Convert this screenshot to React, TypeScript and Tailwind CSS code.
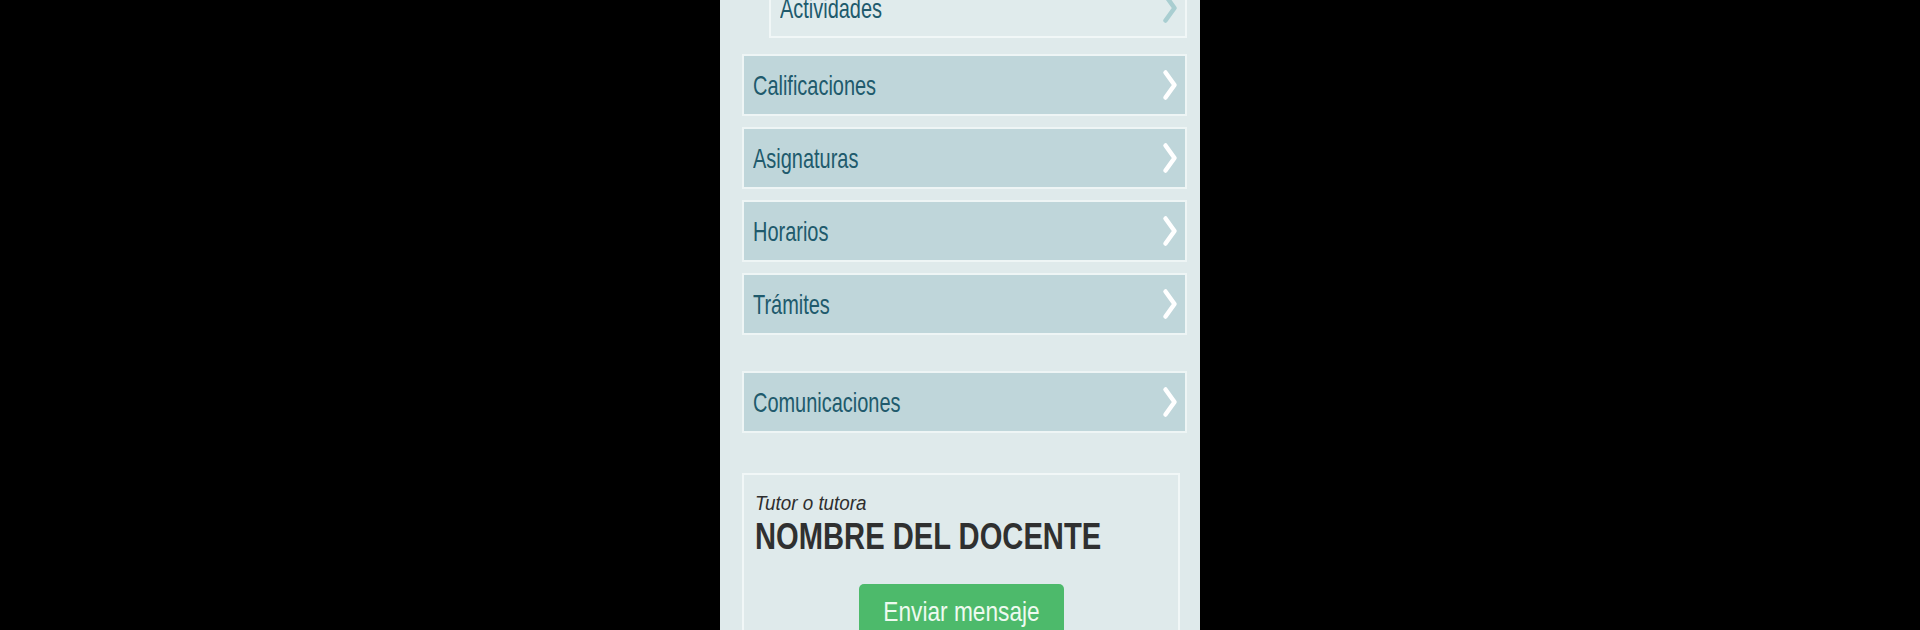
import * as React from 'react';

function Chevron({ faded = false }: { faded?: boolean }) {
  return (
    <svg width="16" height="32" viewBox="0 0 16 32" className="shrink-0">
      <path
        d="M3.5 3.5 L12.5 16 L3.5 28.5"
        fill="none"
        stroke={faded ? '#a9ced1' : '#ffffff'}
        strokeWidth="4.5"
        strokeLinecap="round"
        strokeLinejoin="round"
      />
    </svg>
  );
}

function MenuRow({ label, className = '' }: { label: string; className?: string }) {
  return (
    <div
      className={
        'flex h-[62px] items-center justify-between border-2 border-[#eef5f5] bg-[#bfd6da] pl-[9px] pr-[7px] ' +
        className
      }
    >
      <span className="inline-block origin-left scale-x-[0.7] whitespace-nowrap text-[28.5px] leading-none text-[#205a6c]">
        {label}
      </span>
      <Chevron />
    </div>
  );
}

export default function App() {
  const items = ['Calificaciones', 'Asignaturas', 'Horarios', 'Trámites'];

  return (
    <div className="flex h-[630px] w-full justify-center overflow-hidden bg-black font-['Liberation_Sans',Arial,sans-serif]">
      <div className="flex h-full w-[480px] flex-col bg-[#dfeaeb] pl-[22px] pr-[13px]">
        {/* sub item, partially scrolled out */}
        <div className="-mt-[22px] ml-[27px] flex h-[60px] shrink-0 items-center justify-between border-2 border-[#f1f7f7] bg-[#e0ebec] pl-[9px] pr-[7px]">
          <span className="inline-block origin-left scale-x-[0.7] whitespace-nowrap text-[28.5px] leading-none text-[#205a6c]">
            Actividades
          </span>
          <Chevron faded />
        </div>

        <div className="mt-[16px] flex flex-col gap-[11px]">
          {items.map((it) => (
            <MenuRow key={it} label={it} />
          ))}
        </div>

        <MenuRow label="Comunicaciones" className="mt-[36px] shrink-0" />

        <div className="mr-[7px] mt-[40px] flex shrink-0 flex-col border-2 border-[#f1f7f7] px-[11px] pt-[16px] pb-6">
          <span className="inline-block origin-left scale-x-[0.94] whitespace-nowrap text-[20px] italic leading-[24px] text-[#2e2e2e]">
            Tutor o tutora
          </span>
          <span className="mt-[2px] inline-block origin-left scale-x-[0.81] whitespace-nowrap text-[36px] font-bold leading-[40px] text-[#2f3030]">
            NOMBRE DEL DOCENTE
          </span>
          <div className="mt-[27px] flex justify-center">
            <button className="flex h-[52px] w-[205px] items-center justify-center rounded-[5px] bg-[#4dba6b] pt-[4px] text-[#eefaf0]">
              <span className="inline-block scale-x-[0.81] whitespace-nowrap text-[28px] leading-none">Enviar mensaje</span>
            </button>
          </div>
        </div>
      </div>
    </div>
  );
}
